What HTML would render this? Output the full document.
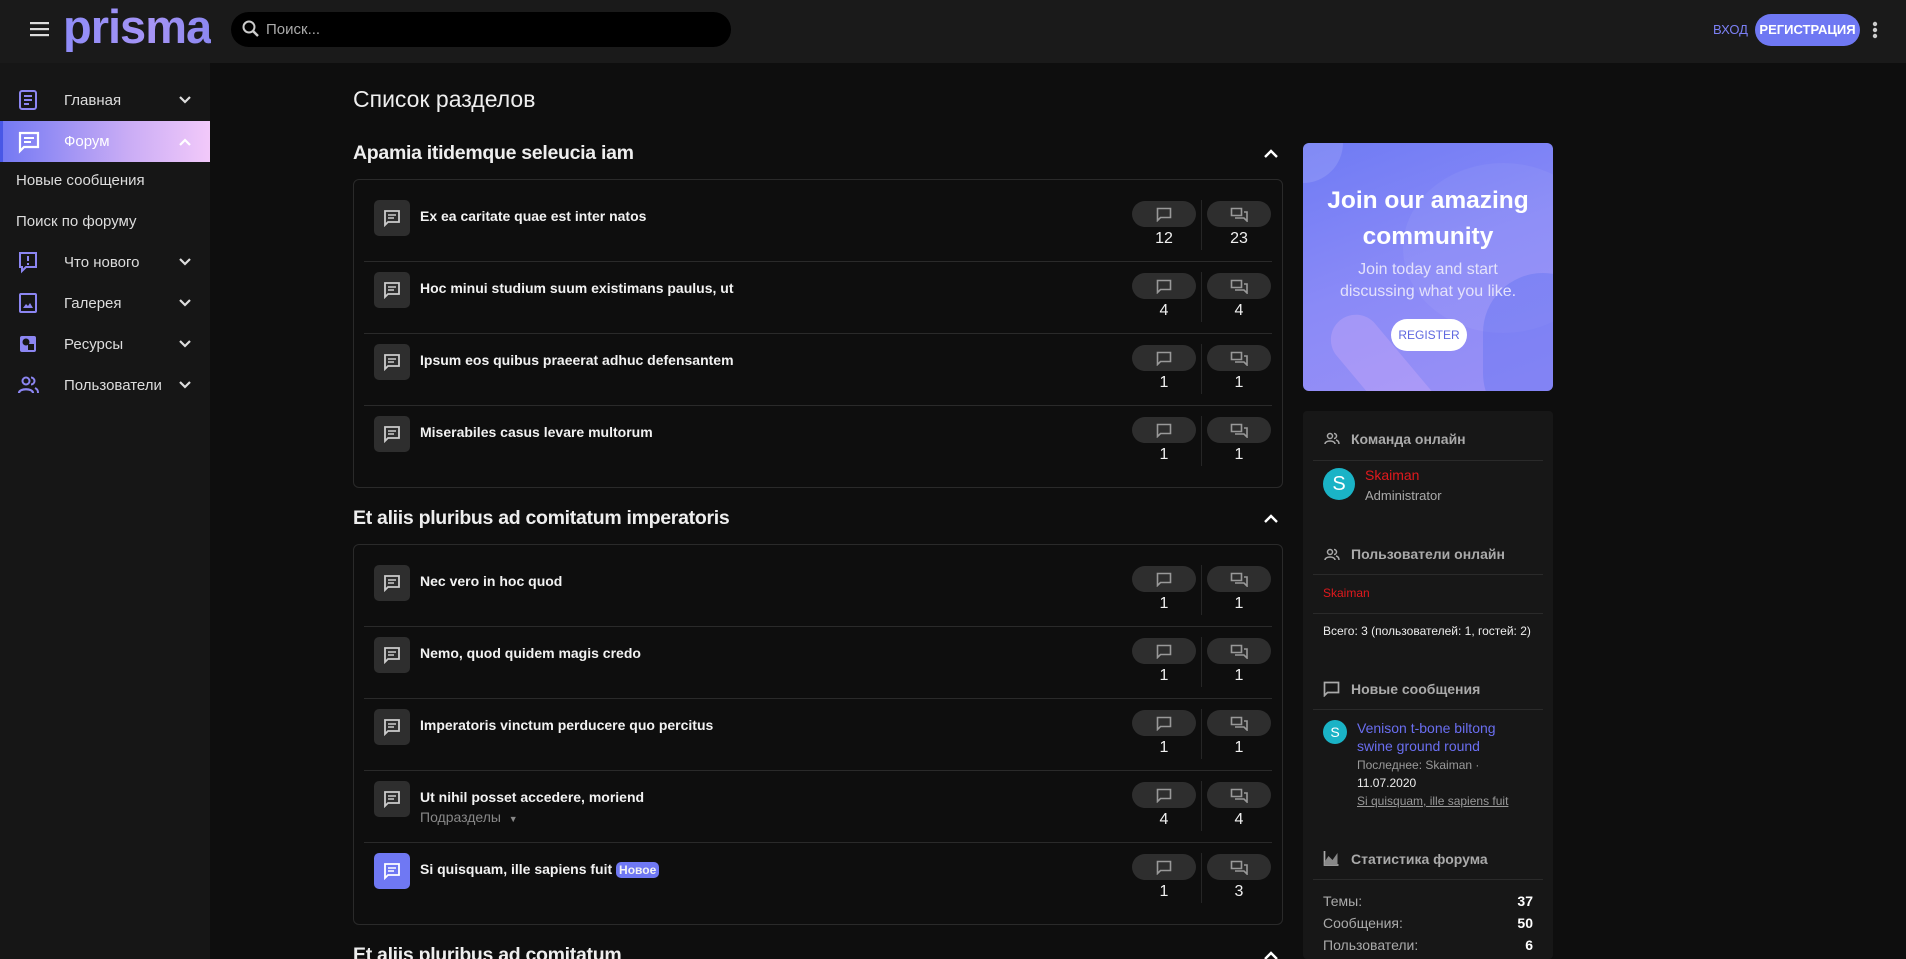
<!DOCTYPE html>
<html><head><meta charset="utf-8">
<style>
*{box-sizing:border-box;margin:0;padding:0}
html,body{overflow:hidden}
body{width:1906px;height:959px;background:#0e0e0e;font-family:"Liberation Sans","Noto Sans CJK SC",sans-serif;color:#fff;position:relative}
.a{position:absolute}
.hdr{left:0;top:0;width:1906px;height:63px;background:#1a1a1a}
.side{left:0;top:63px;width:210px;height:896px;background:#161616}
.nav{position:absolute;left:0;width:210px;height:40px;display:flex;align-items:center;font-size:15px;color:#ddd}
.nav .t{position:absolute;left:64px}
.nav svg.i{position:absolute;left:17px}
.nav .ch{position:absolute;left:178px}
.sub{position:absolute;left:16px;font-size:15px;color:#ddd}
.h1{left:353px;top:86px;font-size:23px;color:#eee}
.h2{left:353px;font-size:19.5px;font-weight:bold;color:#eee;letter-spacing:-0.3px}
.box{left:353px;width:930px;border:1px solid #2a2a2a;border-radius:6px;background:#0e0e0e}
.row{position:absolute;left:374px;width:900px;height:72px}
.ic{position:absolute;left:0;top:0;width:36px;height:36px;border-radius:5px;background:#2e2e2e;display:flex;align-items:center;justify-content:center}
.ti{position:absolute;left:46px;top:8px;font-size:14px;font-weight:bold;color:#f2f2f2;white-space:nowrap}
.pill{position:absolute;top:1px;width:64px;height:26px;border-radius:13px;background:#2e2e2e;display:flex;align-items:center;justify-content:center}
.num{position:absolute;top:30px;width:64px;text-align:center;font-size:16px;color:#f0f0f0}
.vs{position:absolute;left:827px;top:0;width:1px;height:50px;background:#262626}
.sep{position:absolute;left:-10px;top:61px;width:908px;height:1px;background:#2a2a2a}
.w{font-size:14px}
.wh{position:absolute;left:1351px;font-size:14px;font-weight:bold;color:#aaa}
.wl{position:absolute;left:1313px;width:230px;height:1px;background:#2a2a2a}
</style></head><body>
<div class="a hdr"></div>
<svg class="a" style="left:30px;top:21px" width="20" height="16"><rect y="1" width="19" height="2.2" fill="#ddd"/><rect y="7" width="19" height="2.2" fill="#ddd"/><rect y="13" width="19" height="2.2" fill="#ddd"/></svg>
<div class="a" style="left:63px;top:2px;font-size:47px;font-weight:bold;letter-spacing:-1px;line-height:50px;background:linear-gradient(90deg,#8f8cf8,#a594f5 60%,#8b87f0);-webkit-background-clip:text;color:transparent">prisma</div>
<div class="a" style="left:231px;top:12px;width:500px;height:35px;background:#000;border-radius:18px"></div>
<svg class="a" style="left:241px;top:19px" width="20" height="20" viewBox="0 0 20 20"><circle cx="8" cy="8" r="5.5" stroke="#ccc" stroke-width="2" fill="none"/><path d="M12 12l5 5" stroke="#ccc" stroke-width="2.4"/></svg>
<div class="a" style="left:266px;top:21px;font-size:15px;color:#aaa">Поиск...</div>
<div class="a" style="left:1713px;top:22px;font-size:13px;color:#7c80f5">ВХОД</div>
<div class="a" style="left:1755px;top:14px;width:105px;height:32px;border-radius:16px;background:#6f78f3;font-size:13px;font-weight:bold;text-align:center;line-height:32px;color:#fff">РЕГИСТРАЦИЯ</div>
<svg class="a" style="left:1871px;top:20px" width="8" height="20"><circle cx="4" cy="4" r="2.2" fill="#ccc"/><circle cx="4" cy="10" r="2.2" fill="#ccc"/><circle cx="4" cy="16" r="2.2" fill="#ccc"/></svg>

<div class="a side"></div>
<div class="nav" style="top:80px"><svg class="i" width="22" height="22" viewBox="0 0 22 22"><rect x="3" y="2" width="16" height="18" rx="2" fill="none" stroke="#8c86f2" stroke-width="2"/><path d="M7 7h8M7 11h8M7 15h5" stroke="#8c86f2" stroke-width="2"/></svg><span class="t">Главная</span><svg class="ch" width="14" height="10"><path d="M2 2l5 5 5-5" stroke="#ddd" stroke-width="2.2" fill="none"/></svg></div>
<div class="nav" style="top:121px;height:41px;background:linear-gradient(90deg,#7479f3,#c9acf5 60%,#f2c9fa);border-left:3px solid #4857e6;left:0"><svg class="i" style="left:14px" width="24" height="24" viewBox="0 0 24 24"><path d="M3 3h18v14H7l-4 4z" fill="none" stroke="#fff" stroke-width="2.2"/><path d="M7 8h10M7 12h7" stroke="#fff" stroke-width="2"/></svg><span class="t" style="left:61px;color:#fff">Форум</span><svg class="ch" style="left:175px" width="14" height="10"><path d="M2 8l5-5 5 5" stroke="#fff" stroke-width="2.2" fill="none"/></svg></div>
<div class="sub" style="top:172px">Новые сообщения</div>
<div class="sub" style="top:213px">Поиск по форуму</div>
<div class="nav" style="top:242px"><svg class="i" width="22" height="24" viewBox="0 0 22 24"><path d="M3 3h16v14H9l-4 4v-4H3z" fill="none" stroke="#8c86f2" stroke-width="2"/><path d="M11 6v5M11 13v2" stroke="#8c86f2" stroke-width="2"/></svg><span class="t">Что нового</span><svg class="ch" width="14" height="10"><path d="M2 2l5 5 5-5" stroke="#ddd" stroke-width="2.2" fill="none"/></svg></div>
<div class="nav" style="top:283px"><svg class="i" width="22" height="22" viewBox="0 0 22 22"><rect x="3" y="2" width="16" height="18" rx="1" fill="none" stroke="#8c86f2" stroke-width="2"/><path d="M6 16l3-4 2 2 2-3 3 5z" fill="#8c86f2"/></svg><span class="t">Галерея</span><svg class="ch" width="14" height="10"><path d="M2 2l5 5 5-5" stroke="#ddd" stroke-width="2.2" fill="none"/></svg></div>
<div class="nav" style="top:324px"><svg class="i" width="22" height="22" viewBox="0 0 22 22"><rect x="3" y="3" width="16" height="16" rx="2" fill="#8c86f2"/><circle cx="9" cy="9" r="3.5" fill="#161616"/><rect x="11" y="11" width="6" height="6" fill="#161616"/></svg><span class="t">Ресурсы</span><svg class="ch" width="14" height="10"><path d="M2 2l5 5 5-5" stroke="#ddd" stroke-width="2.2" fill="none"/></svg></div>
<div class="nav" style="top:365px"><svg class="i" width="24" height="22" viewBox="0 0 24 22"><circle cx="9" cy="7" r="3.5" fill="none" stroke="#8c86f2" stroke-width="2"/><path d="M2 19c0-5 14-5 14 0" fill="none" stroke="#8c86f2" stroke-width="2.2"/><path d="M14 3.5a3.5 3.5 0 010 7M18 14c2 1 3 2 3 5" fill="none" stroke="#8c86f2" stroke-width="2"/></svg><span class="t">Пользователи</span><svg class="ch" width="14" height="10"><path d="M2 2l5 5 5-5" stroke="#ddd" stroke-width="2.2" fill="none"/></svg></div>

<div class="a h1">Список разделов</div>
<div class="a h2" style="top:142px">Apamia itidemque seleucia iam</div>
<svg class="a" style="left:1263px;top:148px" width="16" height="11"><path d="M2 9l6-6 6 6" stroke="#fff" stroke-width="2.4" fill="none"/></svg>
<div class="a box" style="top:179px;height:309px"></div>
<div class="a h2" style="top:507px">Et aliis pluribus ad comitatum imperatoris</div>
<svg class="a" style="left:1263px;top:513px" width="16" height="11"><path d="M2 9l6-6 6 6" stroke="#fff" stroke-width="2.4" fill="none"/></svg>
<div class="a box" style="top:544px;height:381px"></div>
<div class="a h2" style="top:944px">Et aliis pluribus ad comitatum</div>
<svg class="a" style="left:1263px;top:950px" width="16" height="11"><path d="M2 9l6-6 6 6" stroke="#fff" stroke-width="2.4" fill="none"/></svg>

<div class="row" style="top:200px"><div class="ic"><svg width="18" height="18" viewBox="0 0 18 18"><path d="M2 2h14v11H5l-3 3z" fill="none" stroke="#ccc" stroke-width="1.8"/><path d="M5 6h8M5 9h6" stroke="#ccc" stroke-width="1.6"/></svg></div><div class="ti">Ex ea caritate quae est inter natos</div><div class="pill" style="left:758px"><svg width="16" height="15"><path d="M1.5 1.5h13v9H4.5l-3 3z" fill="none" stroke="#999" stroke-width="1.6"/></svg></div><div class="num" style="left:758px">12</div><div class="vs"></div><div class="pill" style="left:833px"><svg width="18" height="15"><path d="M1.5 1.5h10v7h-10zM5 11h9l3 3V5h-3" fill="none" stroke="#999" stroke-width="1.6"/></svg></div><div class="num" style="left:833px">23</div><div class="sep"></div></div>
<div class="row" style="top:272px"><div class="ic"><svg width="18" height="18" viewBox="0 0 18 18"><path d="M2 2h14v11H5l-3 3z" fill="none" stroke="#ccc" stroke-width="1.8"/><path d="M5 6h8M5 9h6" stroke="#ccc" stroke-width="1.6"/></svg></div><div class="ti">Hoc minui studium suum existimans paulus, ut</div><div class="pill" style="left:758px"><svg width="16" height="15"><path d="M1.5 1.5h13v9H4.5l-3 3z" fill="none" stroke="#999" stroke-width="1.6"/></svg></div><div class="num" style="left:758px">4</div><div class="vs"></div><div class="pill" style="left:833px"><svg width="18" height="15"><path d="M1.5 1.5h10v7h-10zM5 11h9l3 3V5h-3" fill="none" stroke="#999" stroke-width="1.6"/></svg></div><div class="num" style="left:833px">4</div><div class="sep"></div></div>
<div class="row" style="top:344px"><div class="ic"><svg width="18" height="18" viewBox="0 0 18 18"><path d="M2 2h14v11H5l-3 3z" fill="none" stroke="#ccc" stroke-width="1.8"/><path d="M5 6h8M5 9h6" stroke="#ccc" stroke-width="1.6"/></svg></div><div class="ti">Ipsum eos quibus praeerat adhuc defensantem</div><div class="pill" style="left:758px"><svg width="16" height="15"><path d="M1.5 1.5h13v9H4.5l-3 3z" fill="none" stroke="#999" stroke-width="1.6"/></svg></div><div class="num" style="left:758px">1</div><div class="vs"></div><div class="pill" style="left:833px"><svg width="18" height="15"><path d="M1.5 1.5h10v7h-10zM5 11h9l3 3V5h-3" fill="none" stroke="#999" stroke-width="1.6"/></svg></div><div class="num" style="left:833px">1</div><div class="sep"></div></div>
<div class="row" style="top:416px"><div class="ic"><svg width="18" height="18" viewBox="0 0 18 18"><path d="M2 2h14v11H5l-3 3z" fill="none" stroke="#ccc" stroke-width="1.8"/><path d="M5 6h8M5 9h6" stroke="#ccc" stroke-width="1.6"/></svg></div><div class="ti">Miserabiles casus levare multorum</div><div class="pill" style="left:758px"><svg width="16" height="15"><path d="M1.5 1.5h13v9H4.5l-3 3z" fill="none" stroke="#999" stroke-width="1.6"/></svg></div><div class="num" style="left:758px">1</div><div class="vs"></div><div class="pill" style="left:833px"><svg width="18" height="15"><path d="M1.5 1.5h10v7h-10zM5 11h9l3 3V5h-3" fill="none" stroke="#999" stroke-width="1.6"/></svg></div><div class="num" style="left:833px">1</div></div>

<div class="row" style="top:565px"><div class="ic"><svg width="18" height="18" viewBox="0 0 18 18"><path d="M2 2h14v11H5l-3 3z" fill="none" stroke="#ccc" stroke-width="1.8"/><path d="M5 6h8M5 9h6" stroke="#ccc" stroke-width="1.6"/></svg></div><div class="ti">Nec vero in hoc quod</div><div class="pill" style="left:758px"><svg width="16" height="15"><path d="M1.5 1.5h13v9H4.5l-3 3z" fill="none" stroke="#999" stroke-width="1.6"/></svg></div><div class="num" style="left:758px">1</div><div class="vs"></div><div class="pill" style="left:833px"><svg width="18" height="15"><path d="M1.5 1.5h10v7h-10zM5 11h9l3 3V5h-3" fill="none" stroke="#999" stroke-width="1.6"/></svg></div><div class="num" style="left:833px">1</div><div class="sep"></div></div>
<div class="row" style="top:637px"><div class="ic"><svg width="18" height="18" viewBox="0 0 18 18"><path d="M2 2h14v11H5l-3 3z" fill="none" stroke="#ccc" stroke-width="1.8"/><path d="M5 6h8M5 9h6" stroke="#ccc" stroke-width="1.6"/></svg></div><div class="ti">Nemo, quod quidem magis credo</div><div class="pill" style="left:758px"><svg width="16" height="15"><path d="M1.5 1.5h13v9H4.5l-3 3z" fill="none" stroke="#999" stroke-width="1.6"/></svg></div><div class="num" style="left:758px">1</div><div class="vs"></div><div class="pill" style="left:833px"><svg width="18" height="15"><path d="M1.5 1.5h10v7h-10zM5 11h9l3 3V5h-3" fill="none" stroke="#999" stroke-width="1.6"/></svg></div><div class="num" style="left:833px">1</div><div class="sep"></div></div>
<div class="row" style="top:709px"><div class="ic"><svg width="18" height="18" viewBox="0 0 18 18"><path d="M2 2h14v11H5l-3 3z" fill="none" stroke="#ccc" stroke-width="1.8"/><path d="M5 6h8M5 9h6" stroke="#ccc" stroke-width="1.6"/></svg></div><div class="ti">Imperatoris vinctum perducere quo percitus</div><div class="pill" style="left:758px"><svg width="16" height="15"><path d="M1.5 1.5h13v9H4.5l-3 3z" fill="none" stroke="#999" stroke-width="1.6"/></svg></div><div class="num" style="left:758px">1</div><div class="vs"></div><div class="pill" style="left:833px"><svg width="18" height="15"><path d="M1.5 1.5h10v7h-10zM5 11h9l3 3V5h-3" fill="none" stroke="#999" stroke-width="1.6"/></svg></div><div class="num" style="left:833px">1</div><div class="sep"></div></div>
<div class="row" style="top:781px"><div class="ic"><svg width="18" height="18" viewBox="0 0 18 18"><path d="M2 2h14v11H5l-3 3z" fill="none" stroke="#ccc" stroke-width="1.8"/><path d="M5 6h8M5 9h6" stroke="#ccc" stroke-width="1.6"/></svg></div><div class="ti">Ut nihil posset accedere, moriend</div><div style="position:absolute;left:46px;top:28px;font-size:14px;color:#888">Подразделы &nbsp;<span style="font-size:9px">▼</span></div><div class="pill" style="left:758px"><svg width="16" height="15"><path d="M1.5 1.5h13v9H4.5l-3 3z" fill="none" stroke="#999" stroke-width="1.6"/></svg></div><div class="num" style="left:758px">4</div><div class="vs"></div><div class="pill" style="left:833px"><svg width="18" height="15"><path d="M1.5 1.5h10v7h-10zM5 11h9l3 3V5h-3" fill="none" stroke="#999" stroke-width="1.6"/></svg></div><div class="num" style="left:833px">4</div><div class="sep"></div></div>
<div class="row" style="top:853px"><div class="ic" style="background:#6f78f3"><svg width="18" height="18" viewBox="0 0 18 18"><path d="M2 2h14v11H5l-3 3z" fill="none" stroke="#fff" stroke-width="1.8"/><path d="M5 6h8M5 9h6" stroke="#fff" stroke-width="1.6"/></svg></div><div class="ti">Si quisquam, ille sapiens fuit <span style="background:#6f78f3;border-radius:5px;padding:1px 3px;font-size:12px">Новое</span></div><div class="pill" style="left:758px"><svg width="16" height="15"><path d="M1.5 1.5h13v9H4.5l-3 3z" fill="none" stroke="#999" stroke-width="1.6"/></svg></div><div class="num" style="left:758px">1</div><div class="vs"></div><div class="pill" style="left:833px"><svg width="18" height="15"><path d="M1.5 1.5h10v7h-10zM5 11h9l3 3V5h-3" fill="none" stroke="#999" stroke-width="1.6"/></svg></div><div class="num" style="left:833px">3</div></div>

<!-- promo -->
<div class="a" style="left:1303px;top:143px;width:250px;height:248px;border-radius:6px;overflow:hidden;background:linear-gradient(160deg,#6f7bf4,#8a8af7 50%,#9a90f6)">
<div class="a" style="left:-40px;top:-40px;width:80px;height:80px;border-radius:50%;background:rgba(255,255,255,.12)"></div>
<div class="a" style="left:100px;top:20px;width:200px;height:170px;border-radius:50%;background:rgba(255,255,255,.05)"></div>
<div class="a" style="left:180px;top:130px;width:120px;height:160px;border-radius:60px;background:rgba(90,110,240,.35)"></div>
<div class="a" style="left:60px;top:160px;width:50px;height:150px;border-radius:25px;background:rgba(220,180,250,.3);transform:rotate(-40deg)"></div>
<div class="a" style="left:0;top:40px;width:250px;text-align:center;font-size:24.5px;font-weight:bold;line-height:36px">Join our amazing<br>community</div>
<div class="a" style="left:0;top:116px;width:250px;text-align:center;font-size:16px;line-height:22px;color:#e4e2fb">Join today and start<br>discussing what you like.</div>
<div class="a" style="left:88px;top:176px;width:76px;height:32px;border-radius:16px;background:#fff;color:#5f68e0;font-size:12px;text-align:center;line-height:32px">REGISTER</div>
</div>

<!-- widgets -->
<div class="a" style="left:1303px;top:411px;width:250px;height:548px;background:#171717;border-radius:4px"></div>
<svg class="a" style="left:1324px;top:432px" width="16" height="14" viewBox="0 0 16 14"><circle cx="6" cy="4" r="2.5" fill="none" stroke="#aaa" stroke-width="1.5"/><path d="M1 12c0-4 10-4 10 0M10 1.5a2.5 2.5 0 010 5M12 8c2 .5 3 2 3 4" fill="none" stroke="#aaa" stroke-width="1.5"/></svg>
<div class="wh" style="top:431px">Команда онлайн</div>
<div class="wl" style="top:460px"></div>
<div class="a" style="left:1323px;top:468px;width:32px;height:32px;border-radius:50%;background:#1ab3c6;text-align:center;line-height:32px;font-size:20px">S</div>
<div class="a w" style="left:1365px;top:467px;color:#e0191d">Skaiman</div>
<div class="a" style="left:1365px;top:488px;font-size:13px;color:#aaa">Administrator</div>
<svg class="a" style="left:1324px;top:548px" width="16" height="14" viewBox="0 0 16 14"><circle cx="6" cy="4" r="2.5" fill="none" stroke="#aaa" stroke-width="1.5"/><path d="M1 12c0-4 10-4 10 0M10 1.5a2.5 2.5 0 010 5M12 8c2 .5 3 2 3 4" fill="none" stroke="#aaa" stroke-width="1.5"/></svg>
<div class="wh" style="top:546px">Пользователи онлайн</div>
<div class="wl" style="top:574px"></div>
<div class="a" style="left:1323px;top:586px;font-size:12px;color:#e0191d">Skaiman</div>
<div class="wl" style="top:613px"></div>
<div class="a" style="left:1323px;top:624px;font-size:12px;color:#eee">Всего: 3 (пользователей: 1, гостей: 2)</div>
<svg class="a" style="left:1323px;top:681px" width="17" height="16"><path d="M1.5 1.5h14v10H4.5l-3 3z" fill="none" stroke="#aaa" stroke-width="1.7"/></svg>
<div class="wh" style="top:681px">Новые сообщения</div>
<div class="wl" style="top:709px"></div>
<div class="a" style="left:1323px;top:720px;width:24px;height:24px;border-radius:50%;background:#1ab3c6;text-align:center;line-height:24px;font-size:14px">S</div>
<div class="a" style="left:1357px;top:719px;font-size:14px;line-height:18px;color:#6a6ef0">Venison t-bone biltong<br>swine ground round</div>
<div class="a" style="left:1357px;top:756px;font-size:12px;line-height:18px;color:#999">Последнее: Skaiman ·<br><span style="color:#eee">11.07.2020</span><br><span style="text-decoration:underline">Si quisquam, ille sapiens fuit</span></div>
<svg class="a" style="left:1323px;top:850px" width="17" height="16"><path d="M1.5 1v14h14" fill="none" stroke="#aaa" stroke-width="1.7"/><path d="M1.5 12l4-6 4 4 5-7v12h-13z" fill="#888"/></svg>
<div class="wh" style="top:851px">Статистика форума</div>
<div class="wl" style="top:879px"></div>
<div class="a" style="left:1323px;top:890px;width:210px;font-size:14px;line-height:22px;color:#aaa">Темы:<span style="float:right;color:#fff;font-weight:bold">37</span><br>Сообщения:<span style="float:right;color:#fff;font-weight:bold">50</span><br>Пользователи:<span style="float:right;color:#fff;font-weight:bold">6</span></div>
</body></html>
